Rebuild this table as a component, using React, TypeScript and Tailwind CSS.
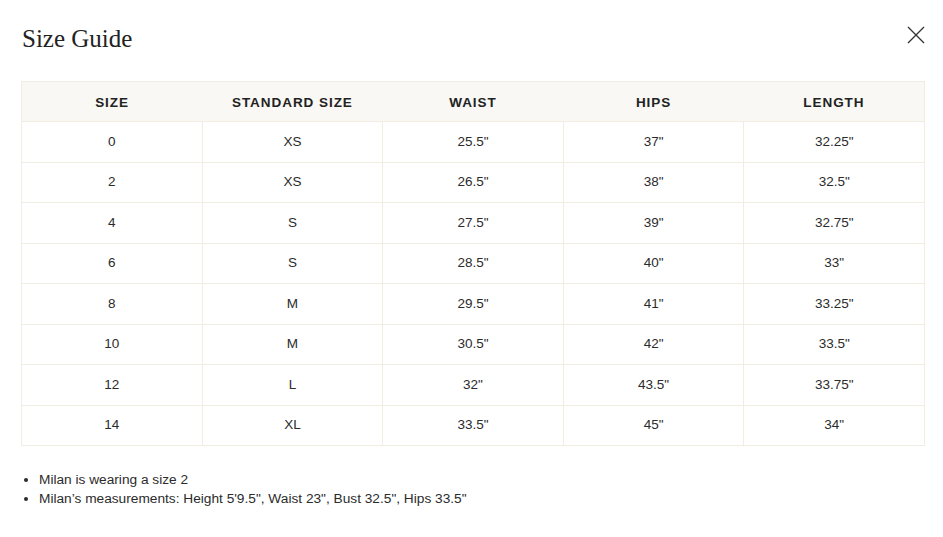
const rows = [
  ["0", "XS", '25.5"', '37"', '32.25"'],
  ["2", "XS", '26.5"', '38"', '32.5"'],
  ["4", "S", '27.5"', '39"', '32.75"'],
  ["6", "S", '28.5"', '40"', '33"'],
  ["8", "M", '29.5"', '41"', '33.25"'],
  ["10", "M", '30.5"', '42"', '33.5"'],
  ["12", "L", '32"', '43.5"', '33.75"'],
  ["14", "XL", '33.5"', '45"', '34"'],
];

const headers = ["Size", "Standard Size", "Waist", "Hips", "Length"];

export default function App() {
  return (
    <div className="w-[943px] h-[537px] bg-white pl-[21px] pr-[18px] pt-[24px] text-[#2b2b2b] font-['Liberation_Sans',Arial,sans-serif]">
      <div className="flex items-start justify-between">
        <h2 className="font-['Liberation_Serif','Times_New_Roman',serif] text-[25px] leading-[30px] text-[#222] ml-px">
          Size Guide
        </h2>
        <button className="mt-[2px] text-[#333]" aria-label="Close">
          <svg width="18" height="18" viewBox="0 0 18 18" fill="none" stroke="currentColor" strokeWidth="1.3">
            <path d="M1 1L17 17M17 1L1 17" />
          </svg>
        </button>
      </div>

      <table className="mt-[27px] w-full table-fixed border-collapse border border-[#f0ede3] text-[13.5px]">
        <thead>
          <tr className="bg-[#f9f8f4]">
            {headers.map((h) => (
              <th
                key={h}
                className="h-[40px] pt-[3px] font-semibold uppercase tracking-[0.07em] text-[13.5px] text-[#222] text-center"
              >
                {h}
              </th>
            ))}
          </tr>
        </thead>
        <tbody>
          {rows.map((r) => (
            <tr key={r[0]}>
              {r.map((c, i) => (
                <td key={i} className="h-[40.5px] border border-[#f0ede3] text-center">
                  {c}
                </td>
              ))}
            </tr>
          ))}
        </tbody>
      </table>

      <ul className="mt-[24px] list-disc pl-[18px] text-[13.7px] leading-[19px]">
        <li>Milan is wearing a size 2</li>
        <li>Milan’s measurements: Height 5'9.5", Waist 23", Bust 32.5", Hips 33.5"</li>
      </ul>
    </div>
  );
}
